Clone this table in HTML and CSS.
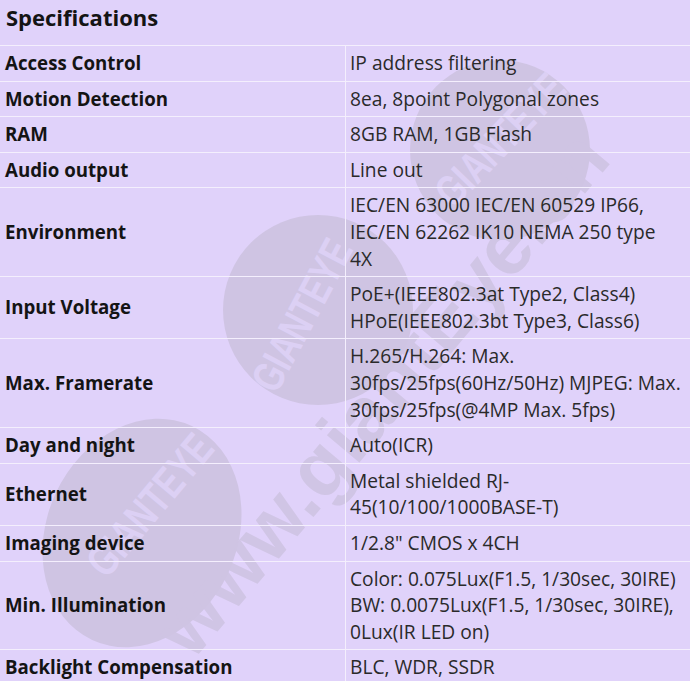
FILE: index.html
```html
<!DOCTYPE html>
<html>
<head>
  <meta charset="UTF-8">
  <meta name="viewport" content="width=device-width, initial-scale=1.0">
  <title>Specifications</title>
  <link rel="stylesheet" href="styles.css">
</head>
<body>
  <svg class="watermark" width="690" height="681" viewBox="0 0 690 681" aria-hidden="true">
    <g class="wm-badge">
      <circle cx="500" cy="150" r="90"></circle>
      <text transform="translate(500 140) rotate(-46)" y="15" textLength="165" lengthAdjust="spacingAndGlyphs">GIANTEYE</text>
    </g>
    <g class="wm-badge">
      <circle cx="318" cy="310" r="95"></circle>
      <text transform="translate(302 315) rotate(-62)" y="15" textLength="165" lengthAdjust="spacingAndGlyphs">GIANTEYE</text>
    </g>
    <g class="wm-badge">
      <ellipse cx="142" cy="533" rx="95" ry="118" transform="rotate(25 142 533)"></ellipse>
      <text transform="translate(150 505) rotate(-50)" y="15" textLength="170" lengthAdjust="spacingAndGlyphs">GIANTEYE</text>
    </g>
    <text class="wm-url" transform="translate(192 662) rotate(-50)">www.giantEye.cn</text>
  </svg>

  <div class="page">
    <div class="spec-title">Specifications</div>

    <table class="spec-table">
      <tr><td class="spec-name">Access Control</td><td class="spec-value">IP address filtering</td></tr>
      <tr><td class="spec-name">Motion Detection</td><td class="spec-value">8ea, 8point Polygonal zones</td></tr>
      <tr><td class="spec-name">RAM</td><td class="spec-value">8GB RAM, 1GB Flash</td></tr>
      <tr><td class="spec-name">Audio output</td><td class="spec-value">Line out</td></tr>
      <tr><td class="spec-name">Environment</td><td class="spec-value">IEC/EN 63000 IEC/EN 60529 IP66, IEC/EN 62262 IK10 NEMA 250 type<br>4X</td></tr>
      <tr><td class="spec-name">Input Voltage</td><td class="spec-value">PoE+(IEEE802.3at Type2, Class4) HPoE(IEEE802.3bt Type3, Class6)</td></tr>
      <tr><td class="spec-name">Max. Framerate</td><td class="spec-value">H.265/H.264: Max. 30fps/25fps(60Hz/50Hz) MJPEG: Max. 30fps/25fps(@4MP Max. 5fps)</td></tr>
      <tr><td class="spec-name">Day and night</td><td class="spec-value">Auto(ICR)</td></tr>
      <tr><td class="spec-name">Ethernet</td><td class="spec-value">Metal shielded RJ-45(10/100/1000BASE-T)</td></tr>
      <tr><td class="spec-name">Imaging device</td><td class="spec-value">1/2.8" CMOS x 4CH</td></tr>
      <tr><td class="spec-name">Min. Illumination</td><td class="spec-value">Color: 0.075Lux(F1.5, 1/30sec, 30IRE) BW: 0.0075Lux(F1.5, 1/30sec, 30IRE), 0Lux(IR LED on)</td></tr>
      <tr><td class="spec-name">Backlight Compensation</td><td class="spec-value">BLC, WDR, SSDR</td></tr>
    </table>
  </div>
</body>
</html>
```

FILE: styles.css
```css
:root {
  --bg-color: #e0d2fa;
  --line-color: #f4effd;
  --label-color: #141414;
  --value-color: #2a2a2a;
  --wm-circle: #cfc4e3;
  --wm-text: #dcd0f4;
}

body {
  margin: 0;
  width: 690px;
  height: 681px;
  overflow: hidden;
  position: relative;
  background: var(--bg-color);
  font-family: 'Open Sans', 'Noto Sans', sans-serif;
}

/* Watermark sits behind the table */
.watermark {
  position: absolute;
  top: 0;
  left: 0;
  z-index: 0;
  pointer-events: none;
}

.wm-badge circle,
.wm-badge ellipse {
  fill: var(--wm-circle);
}

.wm-badge text {
  fill: var(--wm-text);
  font-family: 'Liberation Sans', sans-serif;
  font-weight: 700;
  font-size: 44px;
  text-anchor: middle;
}

.wm-url {
  fill: var(--wm-circle);
  opacity: 0.9;
  font-family: 'Liberation Sans', sans-serif;
  font-weight: 700;
  font-size: 80px;
}

.page {
  position: relative;
  z-index: 1;
}

.spec-title {
  height: 45px;
  padding: 0 6px;
  font-size: 22px;
  font-weight: 700;
  line-height: 34px;
  color: var(--label-color);
}

.spec-table {
  width: 690px;
  border-collapse: collapse;
  table-layout: fixed;
}

.spec-table td {
  padding: 4px 3px 4px 4px;
  border: 1px solid var(--line-color);
  font-size: 19.2px;
  line-height: 26.6px;
  vertical-align: middle;
}

.spec-table td:first-child {
  border-left: none;
  width: 337px;
  padding-left: 5px;
}

.spec-table td:last-child {
  border-right: none;
}

.spec-name {
  font-weight: 700;
  color: var(--label-color);
}

.spec-table td.spec-name {
  font-size: 18.7px;
}

.spec-value {
  color: var(--value-color);
}
```
